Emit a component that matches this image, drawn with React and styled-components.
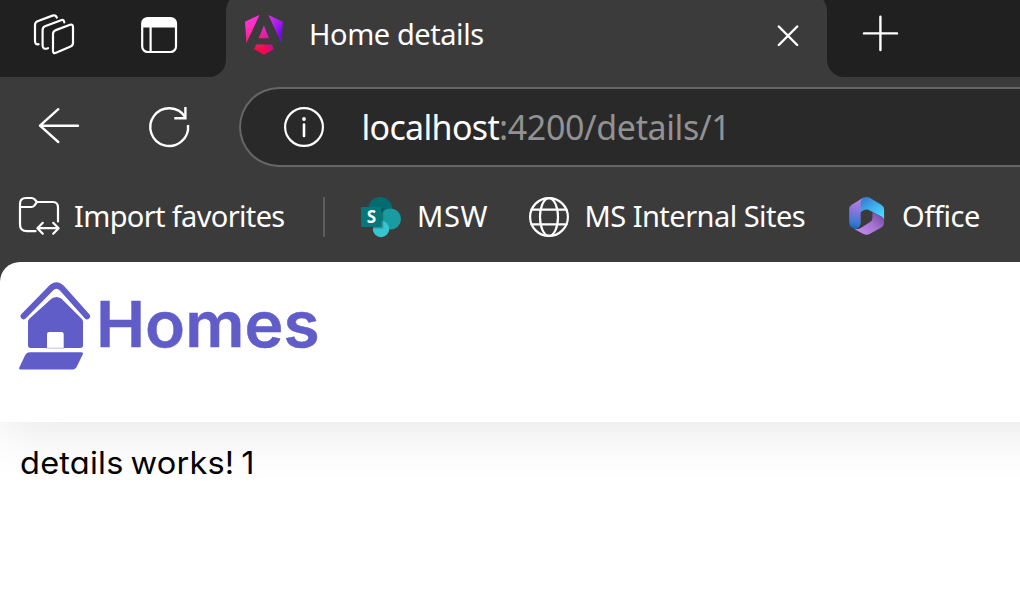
import React from "react";
import styled, { createGlobalStyle } from "styled-components";

const GlobalStyle = createGlobalStyle`
  * { box-sizing: border-box; }
  html, body { margin: 0; height: 100%; overflow: hidden; background: #fff; }
`;

const Browser = styled.div`
  width: 1020px;
  height: 599px;
  display: flex;
  flex-direction: column;
  overflow: hidden;
  background: #3b3b3b;
  font-family: "Noto Sans", "Open Sans", sans-serif;
  color: #fff;
`;

const Icon = styled.svg`
  display: block;
  flex: none;
  overflow: visible;
  fill: none;
  stroke: ${(p) => p.$stroke || "none"};
  stroke-width: ${(p) => p.$weight || 2.2};
  stroke-linecap: round;
  stroke-linejoin: round;
`;

const TabStrip = styled.div`
  flex: none;
  display: flex;
  height: 77px;
`;

const StripStart = styled.div`
  width: 226px;
  display: flex;
  align-items: flex-start;
  gap: 66px;
  padding: 14px 0 0 34px;
  background: #202020;
  border-bottom-right-radius: 17px;
`;

const TabSlot = styled.div`
  width: 601px;
  overflow: hidden;
  background: linear-gradient(#202020 40px, #3b3b3b 40px);
`;

const Tab = styled.div`
  height: 84px;
  margin-top: -7px;
  padding: 7px 28px 7px 19px;
  display: flex;
  align-items: flex-start;
  background: #3b3b3b;
  border-radius: 18px 18px 0 0;
`;

const TabIcon = styled.div`
  padding-top: 15px;
`;

const TabTitle = styled.div`
  flex: 1;
  padding-left: 26px;
  font-size: 29px;
  line-height: 40px;
  padding-top: 14px;
  letter-spacing: ${(p) => p.$spacing}px;
  white-space: nowrap;
`;

const TabClose = styled.div`
  padding-top: 25px;
`;

const StripEnd = styled.div`
  flex: 1;
  padding: 15px 0 0 35px;
  background: #202020;
  border-bottom-left-radius: 17px;
`;

const Toolbar = styled.div`
  flex: none;
  height: 100px;
  display: flex;
  padding: 10px 0 0 38px;
`;

const NavButtons = styled.div`
  width: 201px;
  flex: none;
  display: flex;
  align-items: flex-start;
  gap: 70px;
  padding-top: 20px;
`;

const AddressBar = styled.div`
  flex: 1;
  height: 80px;
  display: flex;
  align-items: center;
  padding-left: 43px;
  background: #292929;
  border: 2px solid #666;
  border-right: 0;
  border-radius: 40px 0 0 40px;
`;

const Url = styled.div`
  margin-left: 37.5px;
  color: #fff;
  font-size: 34px;
  line-height: 50px;
  letter-spacing: ${(p) => p.$spacing}px;
  white-space: nowrap;
`;

const UrlRest = styled.span`
  color: #929292;
  letter-spacing: ${(p) => p.$spacing}px;
`;

const FavoritesBar = styled.div`
  flex: none;
  height: 85px;
  display: flex;
  align-items: flex-start;
  padding: 20px 0 0 19px;
`;

const Favorite = styled.div`
  flex: none;
  display: flex;
  align-items: flex-start;
  width: ${(p) => p.$width}px;
  height: 40px;
`;

const FavoriteLabel = styled.span`
  margin: -1px 0 0 ${(p) => p.$gap}px;
  font-size: 29px;
  line-height: 40px;
  letter-spacing: ${(p) => p.$spacing || 0}px;
  white-space: nowrap;
`;

const Divider = styled.div`
  width: 2px;
  height: 40px;
  margin-right: 36px;
  background: #5c5c5c;
`;

const Page = styled.main`
  flex: 1;
  overflow: hidden;
  background: #fff;
  border-top-left-radius: 20px;
`;

const PageHeader = styled.header`
  height: 160px;
  margin-right: -100px;
  display: flex;
  align-items: flex-start;
  padding: 20px 0 0 19px;
  box-shadow: 0 10px 50px #e8e8e8;
`;

const BrandName = styled.span`
  margin-left: 4.5px;
  color: #605dc8;
  font-family: Inter, sans-serif;
  font-weight: 600;
  font-size: 63px;
  line-height: 85px;
  -webkit-text-stroke: 0.5px #605dc8;
  transform: scaleX(1.045);
  transform-origin: 0 50%;
`;

const Details = styled.p`
  margin: 0;
  padding: 20px 0;
  margin-left: 19.5px;
  color: #000;
  font-family: Inter, sans-serif;
  font-feature-settings: "cv11";
  font-size: 31px;
  line-height: 42px;
  letter-spacing: 0.2px;
  word-spacing: -2.4px;
  transform: scaleX(1.05);
  transform-origin: 0 50%;
`;

const WorkspacesIcon = () => (
  <Icon width="41" height="41" viewBox="34 14 41 41" $stroke="#fff">
    <path d="M53 34Q53 31.3 55.2 30.4L70 24.8Q73 24 73 27V43Q73 45.6 70.6 46.6L56 52.8Q53 54 53 51Z" />
    <path d="M64.3 22.4Q64 19.2 61 20.2L45 26.2Q42.6 27.2 42.6 30V46Q43 50 48 48.2" />
    <path d="M56.8 17.6Q55.8 14.6 52.5 15.6L37.5 21.2Q35 22.3 35 25V41Q35.2 45.2 38.6 44.2" />
  </Icon>
);

const TabActionsIcon = () => (
  <Icon width="36" height="41" viewBox="141 14 36 41" $stroke="#fff">
    <rect x="142.2" y="18" width="33.8" height="34" rx="5.5" />
    <path d="M142 26.5V23q0-5 5-5h24q5 0 5 5v3.5z" fill="#fff" stroke="none" />
    <path d="M142 26.3H176M150.6 27V51" strokeLinecap="butt" />
  </Icon>
);

const AngularIcon = () => (
  <Icon width="38" height="40" viewBox="0 0 223 236">
    <defs>
      <linearGradient id="ng-a" x1="49" x2="225" y1="214" y2="130" gradientUnits="userSpaceOnUse">
        <stop stopColor="#e40035" />
        <stop offset=".24" stopColor="#f60a48" />
        <stop offset=".35" stopColor="#f20755" />
        <stop offset=".49" stopColor="#dc087d" />
        <stop offset=".74" stopColor="#9717e7" />
        <stop offset="1" stopColor="#6c00f5" />
      </linearGradient>
      <linearGradient id="ng-b" x1="22" x2="132" y1="28" y2="178" gradientUnits="userSpaceOnUse">
        <stop stopColor="#ff31d9" />
        <stop offset="1" stopColor="#ff5be1" stopOpacity="0" />
      </linearGradient>
    </defs>
    {["url(#ng-a)", "url(#ng-b)"].map((fill) => (
      <path
        key={fill}
        fill={fill}
        d="m222.077 39.192-8.019 125.923L137.387 0l84.69 39.192Zm-53.105 162.825-57.933 33.056-57.934-33.056 11.783-28.556h92.301l11.783 28.556ZM111.039 62.675l30.357 73.803H80.681l30.358-73.803ZM7.937 165.115 0 39.192 84.69 0 7.937 165.115Z"
      />
    ))}
  </Icon>
);

const CloseIcon = () => (
  <Icon width="22" height="22" viewBox="777 25 22 22" $stroke="#fff" $weight={2.4}>
    <path d="M778.8 26.5L797.2 45M797.2 26.5L778.8 45" />
  </Icon>
);

const PlusIcon = () => (
  <Icon width="36" height="36" viewBox="862 15 36 36" $stroke="#fff" $weight={2.4}>
    <path d="M864 33.4H897M880.4 16.7V50" />
  </Icon>
);

const BackIcon = () => (
  <Icon width="41" height="40" viewBox="38 107 41 40" $stroke="#fff" $weight={2.4}>
    <path d="M58.3 109.2L40 125.7L58.3 142M40 125.7H78" />
  </Icon>
);

const ReloadIcon = () => (
  <Icon width="40" height="40" viewBox="149 107 40 40" $stroke="#fff" $weight={2.4}>
    <path d="M188 125A18.9 18.9 0 1 1 185.2 117" strokeLinecap="butt" />
    <path d="M185.4 107V118.2H174.3" strokeLinecap="butt" strokeLinejoin="miter" />
  </Icon>
);

const InfoIcon = () => (
  <Icon width="40" height="40" viewBox="284 107 40 40" $stroke="#fff">
    <circle cx="304" cy="127" r="18.9" />
    <path d="M304 124.6V136" strokeWidth="2.6" />
    <circle cx="304" cy="119" r="1.9" fill="#fff" stroke="none" />
  </Icon>
);

const ImportIcon = () => (
  <Icon width="41" height="40" viewBox="19 197 41 40" $stroke="#fff">
    <path d="M35.5 231.2H27Q20 231.2 20 224.5V204Q20 198 26 198H31.5Q33.3 198 34.5 199.3L37 202H53Q58 202 58 207.5V221.5" />
    <path d="M20 207H31.5Q33.2 207 34.3 205.6L37 202" />
    <path d="M37.5 228.2H58.5M42.8 222.8L37.4 228.2L42.8 233.7M53.2 222.8L58.6 228.2L53.2 233.7" />
  </Icon>
);

const SIcon = styled.text`
  font-family: "Open Sans", sans-serif;
  font-weight: 700;
  font-size: 17px;
  fill: #fff;
  text-anchor: middle;
`;

const SharePointIcon = () => (
  <Icon width="40" height="40" viewBox="361 197 40 40">
    <circle cx="380.2" cy="209" r="12" fill="#036c70" />
    <circle cx="390.5" cy="219" r="10.5" fill="#1a9ba1" />
    <circle cx="381" cy="229" r="8.2" fill="#37c6d0" />
    <path d="M368.5 208H383.2V228.4H372.8Q371 221 368.5 220Z" fill="#000" opacity=".25" />
    <rect x="361" y="207" width="20.5" height="20" rx="1" fill="#03787c" />
    <SIcon x="371.4" y="223">S</SIcon>
  </Icon>
);

const GlobeIcon = () => (
  <Icon width="40" height="40" viewBox="529 197 40 40" $stroke="#fff">
    <circle cx="549" cy="217" r="18.9" />
    <ellipse cx="549" cy="217" rx="9" ry="18.9" />
    <path d="M531.5 209.7H566.5M531.5 224.3H566.5" />
  </Icon>
);

const OfficeIcon = () => (
  <Icon width="35" height="38" viewBox="848.5 198 35 38">
    <defs>
      <linearGradient id="of-a" x1="0" y1="0" x2=".7" y2="1">
        <stop stopColor="#2f73cf" />
        <stop offset=".6" stopColor="#43b2ee" />
        <stop offset="1" stopColor="#45ddff" />
      </linearGradient>
      <linearGradient id="of-b" x1=".5" y1="0" x2=".4" y2="1">
        <stop stopColor="#bd84e2" />
        <stop offset=".4" stopColor="#8a77da" />
        <stop offset=".8" stopColor="#3b79d4" />
        <stop offset="1" stopColor="#1265b5" />
      </linearGradient>
      <linearGradient id="of-c" x1="1" y1="0" x2="0" y2=".9">
        <stop stopColor="#6c3f98" />
        <stop offset=".5" stopColor="#a573d3" />
        <stop offset="1" stopColor="#c88cf0" />
      </linearGradient>
    </defs>
    <path d="M860 200.3L863.2 198.5Q866 197.3 868.8 198.6L880.8 205.7Q883.6 207.5 883.6 210.6V221Q883 218.8 880.8 217.6L867.8 210.7Q865.5 210 863 211.2L859 214Z" fill="url(#of-a)" />
    <path d="M863.2 198.5Q860.2 200.3 860.2 204V223.8Q859.8 229.6 854.5 230.3L851.4 228.6Q848.7 227 848.7 223.7V210.3Q848.8 207.1 851.5 205.4Z" fill="url(#of-b)" />
    <path d="M854 230.2Q857.5 230.6 860.3 228.9L870 222.8Q872 221.3 872 218.7V212.9L880.8 217.6Q883.6 219.4 883.6 222.6V224Q883.4 227 880.8 228.6L869 235Q866 236.4 863 235Z" fill="url(#of-c)" />
  </Icon>
);

const HouseLogo = () => (
  <Icon width="72" height="90" viewBox="19 282 72 90">
    <path d="M23.7 316.2L50.8 288.3Q56.4 282.8 62 288.3L87 316.2" stroke="#605dc8" strokeWidth="6.2" />
    <path d="M28 321.8Q28 320 29.3 318.7L51.7 298.6Q56.5 295.2 61.3 298.6L81.7 318.7Q83 320 83 321.8V345.3Q83 348 80.3 348H63.7V334.2Q63.7 332 61.5 332H49.2Q47 332 47 334.2V348H30.7Q28 348 28 345.3Z" fill="#605dc8" />
    <path d="M47 348.2H64" stroke="#605dc8" strokeWidth=".4" />
    <path d="M30 352.2H81.3Q83.6 352.2 82.8 354.2L77 366.2Q75.5 369.6 72 369.6H20.3Q18.4 369.4 19.3 367.6L25 355.6Q26.5 352.2 30 352.2Z" fill="#605dc8" />
  </Icon>
);

export default function App() {
  return (
    <>
      <GlobalStyle />
      <Browser>
        <TabStrip>
          <StripStart>
            <WorkspacesIcon />
            <TabActionsIcon />
          </StripStart>
          <TabSlot>
            <Tab>
              <TabIcon><AngularIcon /></TabIcon>
              <TabTitle $spacing={-0.43}>Home details</TabTitle>
              <TabClose><CloseIcon /></TabClose>
            </Tab>
          </TabSlot>
          <StripEnd><PlusIcon /></StripEnd>
        </TabStrip>
        <Toolbar>
          <NavButtons>
            <BackIcon />
            <ReloadIcon />
          </NavButtons>
          <AddressBar>
            <InfoIcon />
            <Url $spacing={-0.68}>localhost<UrlRest $spacing={-0.38}>:4200/details/1</UrlRest></Url>
          </AddressBar>
        </Toolbar>
        <FavoritesBar>
          <Favorite $width={304}>
            <ImportIcon />
            <FavoriteLabel $gap={14} $spacing={-0.65}>Import favorites</FavoriteLabel>
          </Favorite>
          <Divider />
          <Favorite $width={168}>
            <SharePointIcon />
            <FavoriteLabel $gap={16} $spacing={0.7}>MSW</FavoriteLabel>
          </Favorite>
          <Favorite $width={319.5}>
            <GlobeIcon />
            <FavoriteLabel $gap={15.5} $spacing={-0.53}>MS Internal Sites</FavoriteLabel>
          </Favorite>
          <Favorite $width={150}>
            <OfficeIcon />
            <FavoriteLabel $gap={18.5} $spacing={-0.4}>Office</FavoriteLabel>
          </Favorite>
        </FavoritesBar>
        <Page>
          <PageHeader>
            <HouseLogo />
            <BrandName>Homes</BrandName>
          </PageHeader>
          <Details>details works! 1</Details>
        </Page>
      </Browser>
    </>
  );
}
